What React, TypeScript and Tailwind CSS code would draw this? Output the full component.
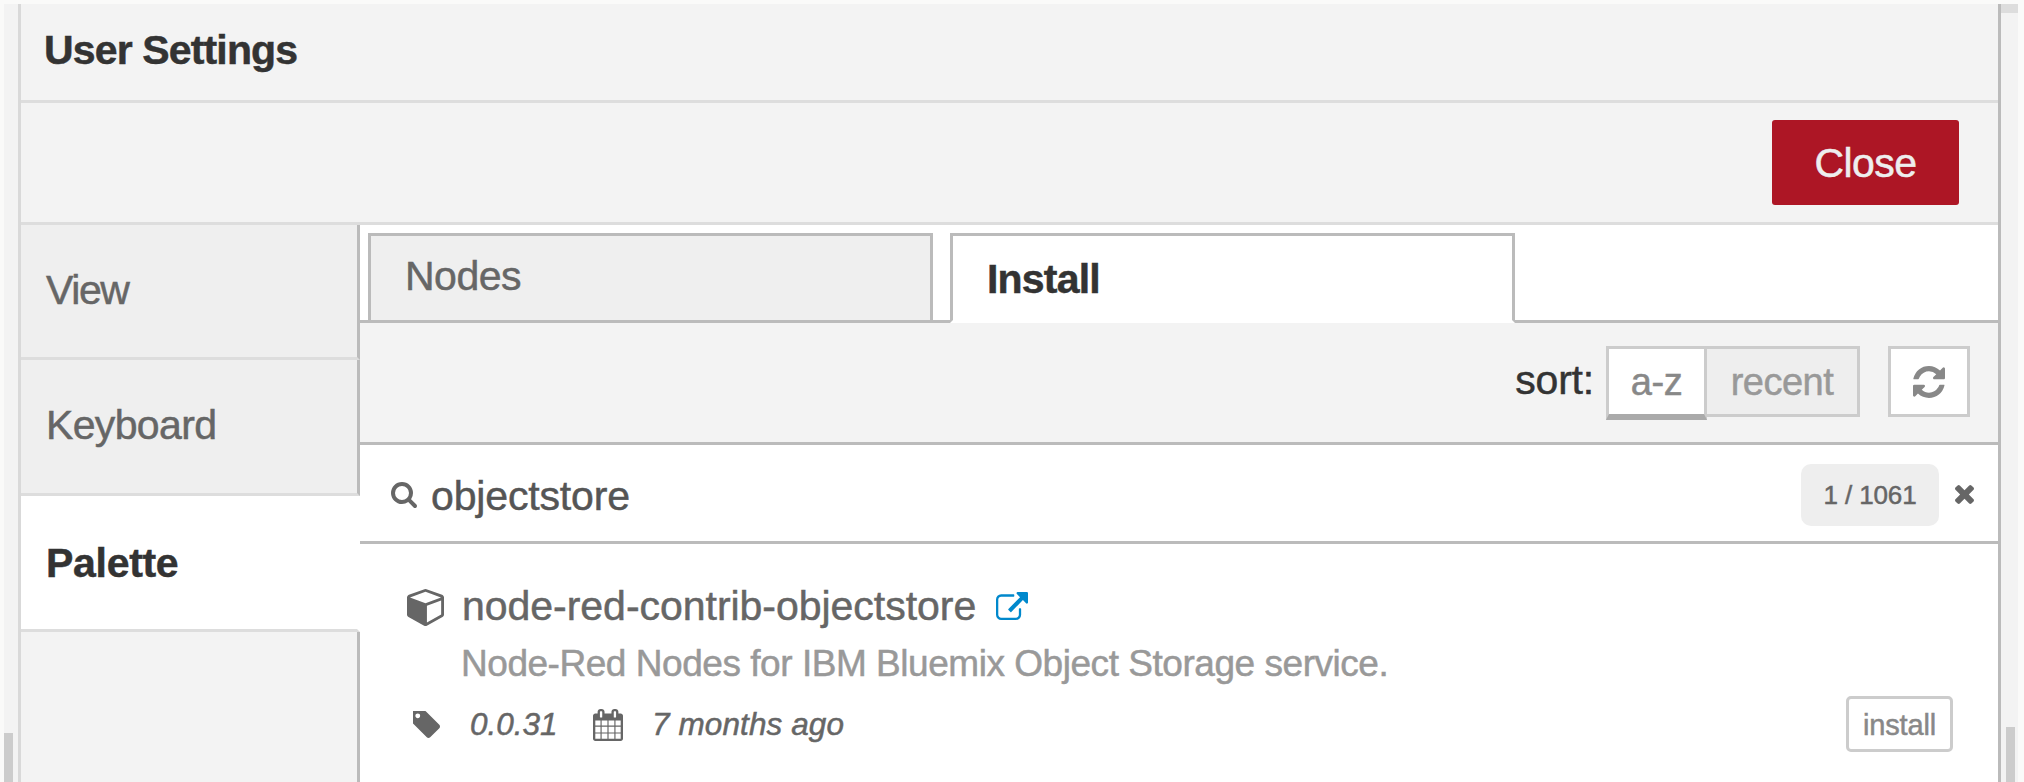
import type { ReactNode } from "react";

type IconProps = { viewBox: string; className: string; d: string };

function Icon({ viewBox, className, d }: IconProps) {
  return (
    <svg viewBox={viewBox} className={`block shrink-0 fill-current ${className}`} preserveAspectRatio="none" aria-hidden="true">
      <path d={d} />
    </svg>
  );
}

const REFRESH =
  "M1639 1056q0 5-1 7-64 268-268 434.5t-478 166.5q-146 0-282.5-55t-243.5-157l-129 129q-19 19-45 19t-45-19-19-45v-448q0-26 19-45t45-19h448q26 0 45 19t19 45-19 45l-137 137q71 66 161 102t187 36q134 0 250-65t186-179q11-17 53-117 8-23 30-23h192q13 0 22.5 9.5t9.5 22.5zm25-800v448q0 26-19 45t-45 19h-448q-26 0-45-19t-19-45 19-45l138-138q-148-137-349-137-134 0-250 65t-186 179q-11 17-53 117-8 23-30 23h-199q-13 0-22.5-9.5t-9.5-22.5v-7q65-268 270-434.5t480-166.5q146 0 284 55.5t245 156.5l130-129q19-19 45-19t45 19 19 45z";
const SEARCH =
  "M1216 832q0-185-131.5-316.5t-316.5-131.5-316.5 131.5-131.5 316.5 131.5 316.5 316.5 131.5 316.5-131.5 131.5-316.5zm512 832q0 52-38 90t-90 38q-54 0-90-38l-343-342q-179 124-399 124-143 0-273.5-55.5t-225-150-150-225-55.5-273.5 55.5-273.5 150-225 225-150 273.5-55.5 273.5 55.5 225 150 150 225 55.5 273.5q0 220-124 399l343 343q37 37 37 90z";
const TAG =
  "M576 448q0-53-37.5-90.5t-90.5-37.5-90.5 37.5-37.5 90.5 37.5 90.5 90.5 37.5 90.5-37.5 37.5-90.5zm1067 576q0 53-37 90l-491 492q-39 37-91 37-53 0-90-37l-715-716q-38-37-64.5-101t-26.5-117v-416q0-52 38-90t90-38h416q53 0 117 26.5t102 64.5l715 714q37 39 37 91z";
const CALENDAR =
  "M192 1664h288v-288h-288v288zm352 0h320v-288h-320v288zm-352-352h288v-320h-288v320zm352 0h320v-320h-320v320zm-352-384h288v-288h-288v288zm736 736h320v-288h-320v288zm-384-736h320v-288h-320v288zm768 736h288v-288h-288v288zm-384-352h320v-320h-320v320zm-352-864v-288q0-13-9.5-22.5t-22.5-9.5h-64q-13 0-22.5 9.5t-9.5 22.5v288q0 13 9.5 22.5t22.5 9.5h64q13 0 22.5-9.5t9.5-22.5zm736 864h288v-320h-288v320zm-384-384h320v-288h-320v288zm384 0h288v-288h-288v288zm32-480v-288q0-13-9.5-22.5t-22.5-9.5h-64q-13 0-22.5 9.5t-9.5 22.5v288q0 13 9.5 22.5t22.5 9.5h64q13 0 22.5-9.5t9.5-22.5zm384-64v1280q0 52-38 90t-90 38h-1408q-52 0-90-38t-38-90v-1280q0-52 38-90t90-38h128v-96q0-66 47-113t113-47h64q66 0 113 47t47 113v96h384v-96q0-66 47-113t113-47h64q66 0 113 47t47 113v96h128q52 0 90 38t38 90z";
const EXTERNAL =
  "M1408 928v320q0 119-84.5 203.5t-203.5 84.5h-832q-119 0-203.5-84.5t-84.5-203.5v-832q0-119 84.5-203.5t203.5-84.5h704q14 0 23 9t9 23v64q0 14-9 23t-23 9h-704q-66 0-113 47t-47 113v832q0 66 47 113t113 47h832q66 0 113-47t47-113v-320q0-14 9-23t23-9h64q14 0 23 9t9 23zm384-864v512q0 26-19 45t-45 19-45-19l-176-176-652 652q-10 10-23 10t-23-10l-114-114q-10-10-10-23t10-23l652-652-176-176q-19-19-19-45t19-45 45-19h512q26 0 45 19t19 45z";
const CUBE =
  "M896 1629l640-349v-636l-640 233v752zm-64-865l698-254-698-254-698 254zm832-252v768q0 35-18 65t-49 47l-704 384q-28 16-61 16t-61-16l-704-384q-31-17-49-47t-18-65v-768q0-40 23-73t61-47l704-256q22-8 44-8t44 8l704 256q38 14 61 47t23 73z";
const TIMES =
  "M1490 1322q0 40-28 68l-136 136q-28 28-68 28t-68-28l-294-294-294 294q-28 28-68 28t-68-28l-136-136q-28-28-28-68t28-68l294-294-294-294q-28-28-28-68t28-68l136-136q28-28 68-28t68 28l294 294 294-294q28-28 68-28t68 28l136 136q28 28 28 68t-28 68l-294 294 294 294q28 28 28 68z";

function SideItem({ className, children }: { className: string; children: ReactNode }) {
  return (
    <button className={`block w-full shrink-0 border-r-[3px] border-b-[3px] border-b-[#dddddd] pl-[25px] text-left ${className}`}>
      {children}
    </button>
  );
}

function Sidebar() {
  return (
    <nav className="flex w-[339px] shrink-0 flex-col">
      <SideItem className="h-[135px] border-r-[#bbbbbb] bg-[#efefef] pb-1 leading-[130px] tracking-[-1.4px] text-[#666666]">View</SideItem>
      <SideItem className="h-[136px] border-r-[#bbbbbb] bg-[#efefef] pb-0.5 leading-[131px] tracking-[-0.65px] text-[#666666]">Keyboard</SideItem>
      <SideItem className="h-[136px] border-r-white bg-white pt-0.5 leading-[131px] font-bold tracking-[-0.3px] text-[#333333]">Palette</SideItem>
      <div className="flex-1 border-r-[3px] border-[#bbbbbb] bg-[#f3f3f3]" />
    </nav>
  );
}

function Tabs() {
  return (
    <div className="flex h-[98px] shrink-0 items-stretch bg-white">
      <div className="w-2 border-b-[3px] border-[#bbbbbb]" />
      <div className="mt-2 w-[565px] border-[3px] border-[#bbbbbb] bg-[#efefef] pl-[34px] leading-[80px] tracking-[-0.5px] text-[#666666]">
        Nodes
      </div>
      <div className="w-[17px] border-b-[3px] border-[#bbbbbb]" />
      <div className="mt-2 w-[565px] border-[3px] border-[#bbbbbb] border-b-white pl-[34px] leading-[86px] font-bold tracking-[-0.8px] text-[#333333]">
        Install
      </div>
      <div className="flex-1 border-b-[3px] border-[#bbbbbb]" />
    </div>
  );
}

function Toolbar() {
  return (
    <div className="flex h-[122px] shrink-0 items-start justify-end border-b-[3px] border-[#bbbbbb] bg-[#f3f3f3] pt-[23px] pr-7">
      <span className="mr-3 leading-[69px] tracking-[-0.2px] text-[#333333]">sort:</span>
      <button className="h-[74px] w-[101px] border-[3px] border-b-[6px] border-[#cccccc] border-b-[#aaaaaa] bg-white pt-px text-center text-[38px] leading-[64px] tracking-[-0.5px] text-[#888888]">
        a-z
      </button>
      <button className="h-[71px] w-[153px] border-[3px] border-l-0 border-[#cccccc] bg-[#eeeeee] pt-px text-center text-[38px] leading-[64px] tracking-[-0.5px] text-[#999999]">
        recent
      </button>
      <button className="ml-7 flex h-[71px] w-[82px] items-center justify-center border-[3px] border-[#cccccc] bg-white text-[#888888]">
        <Icon viewBox="128 128 1536 1536" className="size-8" d={REFRESH} />
      </button>
    </div>
  );
}

function SearchBar() {
  return (
    <div className="flex h-[99px] shrink-0 items-center border-b-[3px] border-[#bbbbbb] bg-white pr-6 pl-[31px]">
      <Icon viewBox="64 128 1664 1664" className="mt-[3px] size-[26px] text-[#666666]" d={SEARCH} />
      <span className="mt-[5px] ml-[14px] flex-1 leading-[48px] tracking-[-0.15px] text-[#555555]">objectstore</span>
      <span className="mt-[4px] h-[62px] w-[138px] rounded-[10px] bg-[#eeeeee] text-center text-[26px] leading-[62px] tracking-[-0.1px] text-[#666666]">
        1 / 1061
      </span>
      <Icon viewBox="302 366 1188 1188" className="mt-[3px] ml-4 size-[19px] text-[#666666]" d={TIMES} />
    </div>
  );
}

function PaletteEntry() {
  return (
    <div className="flex-1 bg-white pt-10 pr-[45px] pl-[47px] text-[#666666]">
      <div className="flex h-14 items-start">
        <Icon viewBox="0 128 1664 1664" className="mt-[5px] size-[37px]" d={CUBE} />
        <span className="ml-[18px] leading-[45px] tracking-[-0.03px]">node-red-contrib-objectstore</span>
        <Icon viewBox="0 0 1792 1536" className="mt-2 ml-5 h-7 w-8 text-[#0088cc]" d={EXTERNAL} />
      </div>
      <p className="h-14 pl-[54px] text-[37px] leading-[48px] tracking-[-0.46px] text-[#999999]">
        Node-Red Nodes for IBM Bluemix Object Storage service.
      </p>
      <div className="flex h-14 items-center text-[31.5px] leading-[56px] italic">
        <Icon viewBox="192 192 1451 1451" className="ml-[6px] size-[27px]" d={TAG} />
        <span className="ml-[30px] w-[123px]">0.0.31</span>
        <Icon viewBox="64 0 1664 1792" className="mt-px h-8 w-[30px]" d={CALENDAR} />
        <span className="ml-[29px] flex-1 tracking-[0.1px]">7 months ago</span>
        <button className="h-14 w-[107px] rounded-[5px] border-[3px] border-[#cccccc] pt-px text-center text-[29px] leading-[51px] tracking-[-0.15px] text-[#888888] not-italic">
          install
        </button>
      </div>
    </div>
  );
}

export default function App() {
  return (
    <div className="flex h-[782px] w-[2024px] overflow-hidden bg-[#fafaf9] px-1 pt-1 pr-[6px] font-['Liberation_Sans',Arial,sans-serif] text-[41px] [-webkit-text-stroke:0.5px]">
      <div className="flex w-[14px] shrink-0 flex-col justify-end bg-[#f3f3f3]">
        <div className="h-[49px] w-[9px] bg-[#cccccc]" />
      </div>
      <div className="flex min-w-0 flex-1 flex-col border-r-[3px] border-l-[3px] border-r-[#bbbbbb] border-l-[#d9d9d9] bg-[#f3f3f3]">
        <header className="h-[99px] shrink-0 border-b-[3px] border-[#dddddd] pl-[23px] leading-[92px] font-bold tracking-[-0.85px] text-[#333333]">
          User Settings
        </header>
        <div className="flex h-[122px] shrink-0 justify-end border-b-[3px] border-[#dddddd] pt-[17px] pr-[39px]">
          <button className="h-[85px] w-[187px] rounded-[3px] bg-[#ad1625] text-center leading-[87px] tracking-[-0.6px] text-[#eeeeee]">Close</button>
        </div>
        <div className="flex min-h-0 flex-1">
          <Sidebar />
          <main className="flex min-w-0 flex-1 flex-col">
            <Tabs />
            <Toolbar />
            <SearchBar />
            <PaletteEntry />
          </main>
        </div>
      </div>
      <div className="flex w-[17px] shrink-0 flex-col justify-between bg-[#f3f3f3]">
        <div className="h-[9px] bg-[#dddddd]" />
        <div className="ml-[5px] h-[55px] w-[9px] bg-[#cccccc]" />
      </div>
    </div>
  );
}
